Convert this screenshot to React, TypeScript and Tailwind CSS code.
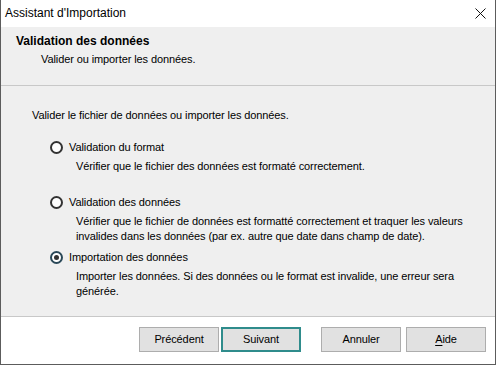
import React from 'react';

const font = { fontFamily: '"Liberation Sans", Arial, sans-serif' };

function Radio({ checked }: { checked?: boolean }) {
  return (
    <span
      className={
        'flex h-[13px] w-[13px] shrink-0 items-center justify-center rounded-full border-2 bg-white ' +
        (checked ? 'border-[#2a4858]' : 'border-[#333333]')
      }
    >
      {checked && <span className="h-[5px] w-[5px] rounded-full bg-[#333333]" />}
    </span>
  );
}

interface Option {
  label: string;
  lines: string[];
  checked?: boolean;
}

const options: Option[] = [
  {
    label: 'Validation du format',
    lines: ['Vérifier que le fichier des données est formaté correctement.'],
  },
  {
    label: 'Validation des données',
    lines: [
      'Vérifier que le fichier de données est formatté correctement et traquer les valeurs',
      'invalides dans les données (par ex. autre que date dans champ de date).',
    ],
  },
  {
    label: 'Importation des données',
    lines: [
      'Importer les données. Si des données ou le format est invalide, une erreur sera',
      'générée.',
    ],
    checked: true,
  },
];

function Button({ children, focused, className = '' }: { children: React.ReactNode; focused?: boolean; className?: string }) {
  return (
    <button
      className={
        'flex h-[25px] w-[80px] items-center justify-center bg-[#e1e1e1] text-[11px] tracking-[-0.1px] text-black ' +
        (focused ? 'border-2 border-[#2f8c8c] ' : 'border border-[#adadad] ') +
        className
      }
    >
      {children}
    </button>
  );
}

export default function App() {
  return (
    <div
      style={font}
      className="flex h-[365px] w-[496px] flex-col border-x border-b border-[#5c5c5c] text-[11px] leading-[15px] tracking-[-0.1px] text-black"
    >
      {/* title bar */}
      <div className="flex h-[27px] shrink-0 items-center justify-between bg-white pl-[4px] pr-[9px] text-[12px] tracking-normal">
        <span className="pb-[1px]">Assistant d'Importation</span>
        <svg width="11" height="11" viewBox="0 0 11 11" className="mb-[1px]">
          <path d="M0.5 0.5 L10.5 10.5 M10.5 0.5 L0.5 10.5" stroke="#111" strokeWidth="1" />
        </svg>
      </div>

      {/* header */}
      <div className="h-[59px] shrink-0 border-b border-[#c8c8c8] bg-[#efefef] pl-[15px] pt-[6px]">
        <div className="text-[12px] font-bold leading-[16px] tracking-normal">Validation des données</div>
        <div className="mt-[3px] pl-[25px]">Valider ou importer les données.</div>
      </div>

      {/* body */}
      <div className="flex-1 bg-[#efefef] pl-[31px] pt-[22px]">
        <div>Valider le fichier de données ou importer les données.</div>
        <div className="mt-[16px]">
          {options.map((o) => (
            <div key={o.label} className="h-[55px]">
              <div className="flex h-[16px] items-center pl-[18px]">
                <Radio checked={o.checked} />
                <span className="ml-[6px]">{o.label}</span>
              </div>
              <div className="mt-[4px] pl-[44px]">
                {o.lines.map((l) => (
                  <div key={l} className="whitespace-nowrap">
                    {l}
                  </div>
                ))}
              </div>
            </div>
          ))}
        </div>
      </div>

      {/* footer */}
      <div className="flex h-[48px] shrink-0 justify-end border-t border-[#c8c8c8] bg-white pr-[9px] pt-[10px]">
        <Button>Précédent</Button>
        <Button focused className="ml-[2px]">
          Suivant
        </Button>
        <Button className="ml-[20px]">Annuler</Button>
        <Button className="ml-[5px]">
          <span className="underline underline-offset-2">A</span>ide
        </Button>
      </div>
    </div>
  );
}
